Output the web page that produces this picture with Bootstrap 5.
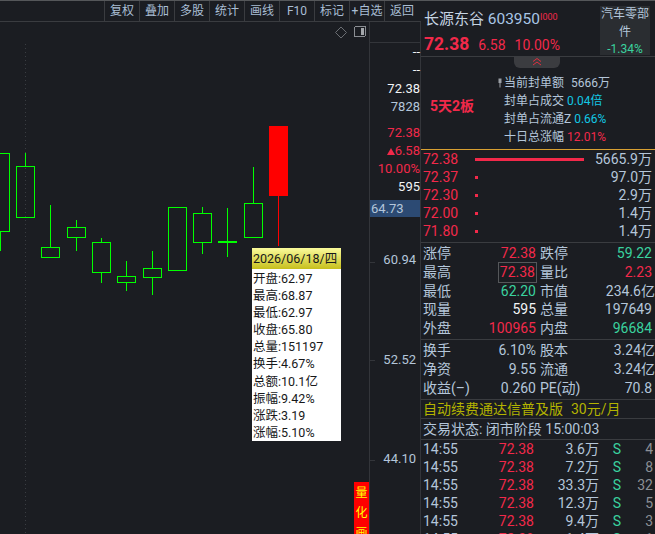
<!DOCTYPE html>
<html lang="zh-CN">
<head>
    <meta charset="UTF-8">
    <title>长源东谷 603950</title>
    <link rel="stylesheet" href="https://cdn.jsdelivr.net/npm/bootstrap@5.3.0/dist/css/bootstrap.min.css">
    <style>
        html, body { height: 534px; overflow: hidden; }
        body {
            background: #1b1d22;
            color: #b4c6da;
            font-family: Roboto, "Noto Sans CJK SC", sans-serif;
            font-size: 14px;
            line-height: 18px;
        }
        .c-red { color: #f2294a; }
        .c-green { color: #3ad29f; }
        .c-cyan { color: #12c8e4; }
        .c-white { color: #f2f4f6; }
        .c-gold { color: #b3b300; }
        .c-gray { color: #8b8f95; }

        /* left side */
        .left-pane { width: 421px; height: 534px; }
        .tool-bar { height: 22px; border-top: 1px solid #55575a; border-bottom: 1px solid #3a3c40; padding-left: 104px; }
        .tool-btn {
            width: 35px; height: 20px; padding: 0; border: 0; border-left: 1px solid #3a3c40; border-radius: 0;
            background: none; color: #a9bdd4; font-size: 12px; line-height: 19px; white-space: nowrap;
        }
        .chart-wrap { height: 512px; }
        .plot-area { width: 369px; height: 512px; }
        .plot-area svg { display: block; }
        .k-up { fill: none; stroke: #00ff00; stroke-width: 1; }
        .k-red { fill: #ff0000; stroke: #ff0000; stroke-width: 1; }
        .axis-pane { width: 52px; height: 512px; border-left: 1px solid #33353a; border-right: 1px solid #33353a; }
        .axis-head { height: 21px; border-bottom: 1px solid #33353a; }
        .axis-val { position: absolute; right: 0; font-size: 13px; line-height: 18px; white-space: nowrap; }
        .axis-tick { position: absolute; left: 0; width: 5px; height: 1px; background: #33353a; }
        .axis-now { position: absolute; left: 0; right: 0; top: 178px; height: 17px; background: #2c4a73; padding-left: 1px; font-size: 13px; line-height: 17px; }
        .tip-box { position: absolute; left: 252px; top: 226px; width: 89px; background: #fff; color: #17181a; font-size: 12.5px; }
        .tip-head { height: 21px; line-height: 21px; padding-left: 1px; font-size: 12.5px; background: linear-gradient(#fbfb9c, #c6bf1c); white-space: nowrap; }
        .tip-rows { padding: 1px 0 0 1px; line-height: 17.1px; white-space: nowrap; }
        .quant-tag { position: absolute; left: 354px; top: 460px; width: 15px; height: 60px; background: #f00; color: #ff0; font-size: 12px; line-height: 20px; text-align: center; font-family: "Noto Sans CJK SC", sans-serif; }

        /* right side */
        .side-pane { width: 234px; height: 534px; overflow: hidden; }
        .stock-head { height: 57px; flex: none; border-top: 1px solid #55575a; border-bottom: 1px solid #3a3c40; padding: 6px 0 0 3px; }
        .stock-name { font-size: 15px; line-height: 20px; color: #c6d4e2; white-space: nowrap; }
        .stock-code { font-size: 15.5px; color: #a9c6e6; }
        .stock-flag { font-size: 9px; color: #f2294a; vertical-align: 4px; }
        .stock-price { font-size: 17.5px; font-weight: 700; }
        .price-row { line-height: 22px; margin-top: 4px; gap: 9px; white-space: nowrap; }
        .sector-box { position: absolute; left: 179px; top: 5px; width: 50px; height: 49px; background: #2a2d31; font-size: 12px; line-height: 17.5px; text-align: center; }
        .seal-box { height: 93px; flex: none; border-bottom: 1px solid #d8a032; }
        .fold-tab { position: absolute; left: 93px; top: 0; width: 46px; height: 11px; background: #3b3c40; border-radius: 0 0 6px 6px; }
        .seal-days { width: 83px; padding-left: 9px; font-size: 14px; font-weight: 700; margin-top: 6px; white-space: nowrap; }
        .seal-lines { font-size: 12px; line-height: 18px; padding-top: 17px; white-space: nowrap; }
        .seal-pin { position: absolute; left: -6px; top: 21px; }
        .book-box { height: 93px; flex: none; border-bottom: 1px solid #3a3c40; padding: 0 3px 0 2px; }
        .book-row { height: 18px; line-height: 18px; }
        .book-price { width: 52px; }
        .book-bar { height: 3px; background: #f2294a; }
        .quote-box { flex: none; border-bottom: 1px solid #3a3c40; padding: 1px 3px 0 2px; }
        .quote-top { height: 97px; }
        .quote-mid { height: 60px; }
        .quote-row { height: 18.8px; line-height: 18.8px; white-space: nowrap; }
        .quote-cell { width: 113px; margin-right: 4px; }
        .quote-hi { outline: 1px solid #55575a; outline-offset: 0; padding: 0 1px; }
        .over-edge { margin-right: -3px; }
        .ad-row { height: 19px; flex: none; line-height: 18px; border-bottom: 1px solid #3a3c40; padding-left: 2px; white-space: nowrap; }
        .state-row { height: 21px; flex: none; line-height: 20px; border-bottom: 1px solid #3a3c40; padding-left: 2px; white-space: nowrap; }
        .trade-row { height: 18px; flex: none; line-height: 18px; padding-left: 2px; white-space: nowrap; }
        .t-time { width: 50px; }
        .t-price { width: 61px; text-align: right; }
        .t-vol { width: 65px; text-align: right; }
        .t-flag { width: 22px; text-align: right; }
        .t-num { width: 32px; text-align: right; }
    </style>
</head>
<body class="d-flex">
    <div class="left-pane d-flex flex-column">
        <!-- toolbar -->
        <div class="tool-bar d-flex">
            <button class="btn tool-btn">复权</button>
            <button class="btn tool-btn">叠加</button>
            <button class="btn tool-btn">多股</button>
            <button class="btn tool-btn">统计</button>
            <button class="btn tool-btn">画线</button>
            <button class="btn tool-btn">F10</button>
            <button class="btn tool-btn">标记</button>
            <button class="btn tool-btn">+自选</button>
            <button class="btn tool-btn">返回</button>
        </div>
        <div class="chart-wrap d-flex position-relative">
            <!-- candles, coordinates are the chart itself -->
            <div class="plot-area">
                <svg width="369" height="512" viewBox="0 22 369 512" shape-rendering="crispEdges">
                    <line x1="25.5" y1="44" x2="25.5" y2="534" stroke="#3a3d42" stroke-dasharray="1 3"/>
                    <g class="k-up">
                        <rect x="-5.5" y="153.5" width="15" height="78"/><path d="M0.5 231V251"/>
                        <rect x="16.5" y="166.5" width="18" height="51"/><path d="M25.5 153V166"/>
                        <rect x="41.5" y="247.5" width="18" height="10"/><path d="M50.5 205V247"/>
                        <rect x="67.5" y="227.5" width="18" height="10"/><path d="M76.5 220V227M76.5 238V251"/>
                        <rect x="92.5" y="242.5" width="18" height="30"/><path d="M101.5 238V242M101.5 273V283"/>
                        <rect x="117.5" y="276.5" width="18" height="6"/><path d="M126.5 261V276M126.5 283V291"/>
                        <rect x="143.5" y="268.5" width="18" height="9"/><path d="M152.5 251V268M152.5 278V295"/>
                        <rect x="168.5" y="207.5" width="18" height="63"/>
                        <rect x="193.5" y="213.5" width="18" height="29"/><path d="M202.5 207V213M202.5 243V254"/>
                        <path d="M227.5 208V257"/><rect x="218.5" y="241.5" width="18" height="1"/>
                        <rect x="244.5" y="203.5" width="18" height="34"/><path d="M253.5 167V203"/>
                    </g>
                    <rect class="k-red" x="269.5" y="126.5" width="18" height="69"/>
                    <path d="M278.5 196V246" stroke="#f00"/>
                    <path d="M341 27L346.5 32.5L341 38L335.5 32.5Z" fill="none" stroke="#6b6e73" shape-rendering="auto"/>
                    <rect x="354.5" y="26.5" width="11" height="10" rx="1.5" fill="none" stroke="#8b8e93"/>
                    <rect x="361" y="28" width="3" height="7" fill="#a4a7ab"/>
                </svg>
            </div>
            <div class="axis-pane position-relative">
                <div class="axis-head"></div>
                <span class="axis-val c-white" style="top:21px">--</span>
                <span class="axis-val c-white" style="top:39px">--</span>
                <span class="axis-val c-white" style="top:58px">72.38</span>
                <span class="axis-val" style="top:76px">7828</span>
                <span class="axis-val c-red" style="top:102px">72.38</span>
                <span class="axis-val c-red" style="top:120px"><svg width="8" height="7" viewBox="0 0 8 7" class="me-0"><path d="M4 0L8 7H0Z" fill="#f2294a"/></svg>6.58</span>
                <span class="axis-val c-red" style="top:138px">10.00%</span>
                <span class="axis-val c-white" style="top:156px">595</span>
                <div class="axis-now">64.73</div>
                <span class="axis-tick" style="top:240px"></span>
                <span class="axis-val" style="top:229px;right:4px">60.94</span>
                <span class="axis-tick" style="top:338px"></span>
                <span class="axis-val" style="top:329px;right:4px">52.52</span>
                <span class="axis-tick" style="top:438px"></span>
                <span class="axis-val" style="top:428px;right:4px">44.10</span>
            </div>
            <!-- hover tooltip -->
            <div class="tip-box">
                <div class="tip-head">2026/06/18/四</div>
                <div class="tip-rows">
                    <div>开盘:62.97</div>
                    <div>最高:68.87</div>
                    <div>最低:62.97</div>
                    <div>收盘:65.80</div>
                    <div>总量:151197</div>
                    <div>换手:4.67%</div>
                    <div>总额:10.1亿</div>
                    <div>振幅:9.42%</div>
                    <div>涨跌:3.19</div>
                    <div>涨幅:5.10%</div>
                </div>
            </div>
            <div class="quant-tag">量<br>化<br>画</div>
        </div>
    </div>

    <div class="side-pane d-flex flex-column">
        <!-- stock title -->
        <div class="stock-head position-relative">
            <div class="stock-name">长源东谷 <span class="stock-code">603950</span><span class="stock-flag">I000</span></div>
            <div class="price-row d-flex align-items-baseline c-red"><span class="stock-price">72.38</span><span>6.58</span><span>10.00%</span></div>
            <div class="sector-box">汽车零部<br>件<br><span class="c-green">-1.34%</span></div>
        </div>
        <!-- seal order -->
        <div class="seal-box d-flex align-items-center position-relative">
            <div class="fold-tab d-flex justify-content-center">
                <svg width="10" height="9" viewBox="0 0 10 9" fill="none" stroke="#e0303f"><path d="M1 4.5L5 1.5L9 4.5M1 8L5 5L9 8"/></svg>
            </div>
            <div class="seal-days c-red">5天2板</div>
            <div class="seal-lines align-self-start position-relative">
                <svg class="seal-pin" width="4" height="10" viewBox="0 0 4 10"><path d="M0.5 0.5H3.5V5H2.5V9.5H1.5V5H0.5Z" fill="#9a9ea4"/></svg>
                <div>当前封单额 <span class="ms-1">5666万</span></div>
                <div>封单占成交 <span class="c-cyan">0.04倍</span></div>
                <div>封单占流通Z <span class="c-cyan">0.66%</span></div>
                <div>十日总涨幅 <span class="c-red">12.01%</span></div>
            </div>
        </div>
        <!-- order book -->
        <div class="book-box">
            <div class="book-row d-flex align-items-center"><span class="book-price c-red">72.38</span><span class="book-bar" style="width:109px"></span><span class="flex-grow-1 text-end">5665.9万</span></div>
            <div class="book-row d-flex align-items-center"><span class="book-price c-red">72.37</span><span class="book-bar" style="width:3px"></span><span class="flex-grow-1 text-end">97.0万</span></div>
            <div class="book-row d-flex align-items-center"><span class="book-price c-red">72.30</span><span class="book-bar" style="width:3px"></span><span class="flex-grow-1 text-end">2.9万</span></div>
            <div class="book-row d-flex align-items-center"><span class="book-price c-red">72.00</span><span class="book-bar" style="width:3px"></span><span class="flex-grow-1 text-end">1.4万</span></div>
            <div class="book-row d-flex align-items-center"><span class="book-price c-red">71.80</span><span class="book-bar" style="width:3px"></span><span class="flex-grow-1 text-end">1.4万</span></div>
        </div>
        <!-- quote table -->
        <div class="quote-box quote-top">
            <div class="quote-row d-flex"><div class="quote-cell d-flex justify-content-between"><span>涨停</span><span class="c-red">72.38</span></div><div class="flex-grow-1 d-flex justify-content-between"><span>跌停</span><span class="c-green">59.22</span></div></div>
            <div class="quote-row d-flex"><div class="quote-cell d-flex justify-content-between"><span>最高</span><span class="c-red quote-hi">72.38</span></div><div class="flex-grow-1 d-flex justify-content-between"><span>量比</span><span class="c-red">2.23</span></div></div>
            <div class="quote-row d-flex"><div class="quote-cell d-flex justify-content-between"><span>最低</span><span class="c-green">62.20</span></div><div class="flex-grow-1 d-flex justify-content-between"><span>市值</span><span class="over-edge">234.6亿</span></div></div>
            <div class="quote-row d-flex"><div class="quote-cell d-flex justify-content-between"><span>现量</span><span class="c-white">595</span></div><div class="flex-grow-1 d-flex justify-content-between"><span>总量</span><span>197649</span></div></div>
            <div class="quote-row d-flex"><div class="quote-cell d-flex justify-content-between"><span>外盘</span><span class="c-red">100965</span></div><div class="flex-grow-1 d-flex justify-content-between"><span>内盘</span><span class="c-green">96684</span></div></div>
        </div>
        <div class="quote-box quote-mid">
            <div class="quote-row d-flex"><div class="quote-cell d-flex justify-content-between"><span>换手</span><span>6.10%</span></div><div class="flex-grow-1 d-flex justify-content-between"><span>股本</span><span class="over-edge">3.24亿</span></div></div>
            <div class="quote-row d-flex"><div class="quote-cell d-flex justify-content-between"><span>净资</span><span>9.55</span></div><div class="flex-grow-1 d-flex justify-content-between"><span>流通</span><span class="over-edge">3.24亿</span></div></div>
            <div class="quote-row d-flex"><div class="quote-cell d-flex justify-content-between"><span>收益(–)</span><span>0.260</span></div><div class="flex-grow-1 d-flex justify-content-between"><span>PE(动)</span><span>70.8</span></div></div>
        </div>
        <div class="ad-row c-gold">自动续费通达信普及版<span class="ms-2">30元/月</span></div>
        <div class="state-row">交易状态: 闭市阶段 15:00:03</div>
        <!-- ticks -->
        <div class="trade-row d-flex"><span class="t-time">14:55</span><span class="t-price c-red">72.38</span><span class="t-vol">3.6万</span><span class="t-flag c-green">S</span><span class="t-num c-gray">4</span></div>
        <div class="trade-row d-flex"><span class="t-time">14:55</span><span class="t-price c-red">72.38</span><span class="t-vol">7.2万</span><span class="t-flag c-green">S</span><span class="t-num c-gray">8</span></div>
        <div class="trade-row d-flex"><span class="t-time">14:55</span><span class="t-price c-red">72.38</span><span class="t-vol">33.3万</span><span class="t-flag c-green">S</span><span class="t-num c-gray">32</span></div>
        <div class="trade-row d-flex"><span class="t-time">14:55</span><span class="t-price c-red">72.38</span><span class="t-vol">12.3万</span><span class="t-flag c-green">S</span><span class="t-num c-gray">5</span></div>
        <div class="trade-row d-flex"><span class="t-time">14:55</span><span class="t-price c-red">72.38</span><span class="t-vol">9.4万</span><span class="t-flag c-green">S</span><span class="t-num c-gray">3</span></div>
        <div class="trade-row d-flex"><span class="t-time">14:55</span><span class="t-price c-red">72.38</span><span class="t-vol">1.4万</span><span class="t-flag c-green">S</span><span class="t-num c-gray">1</span></div>
    </div>
    <script src="https://cdn.jsdelivr.net/npm/bootstrap@5.3.0/dist/js/bootstrap.bundle.min.js"></script>
</body>
</html>
